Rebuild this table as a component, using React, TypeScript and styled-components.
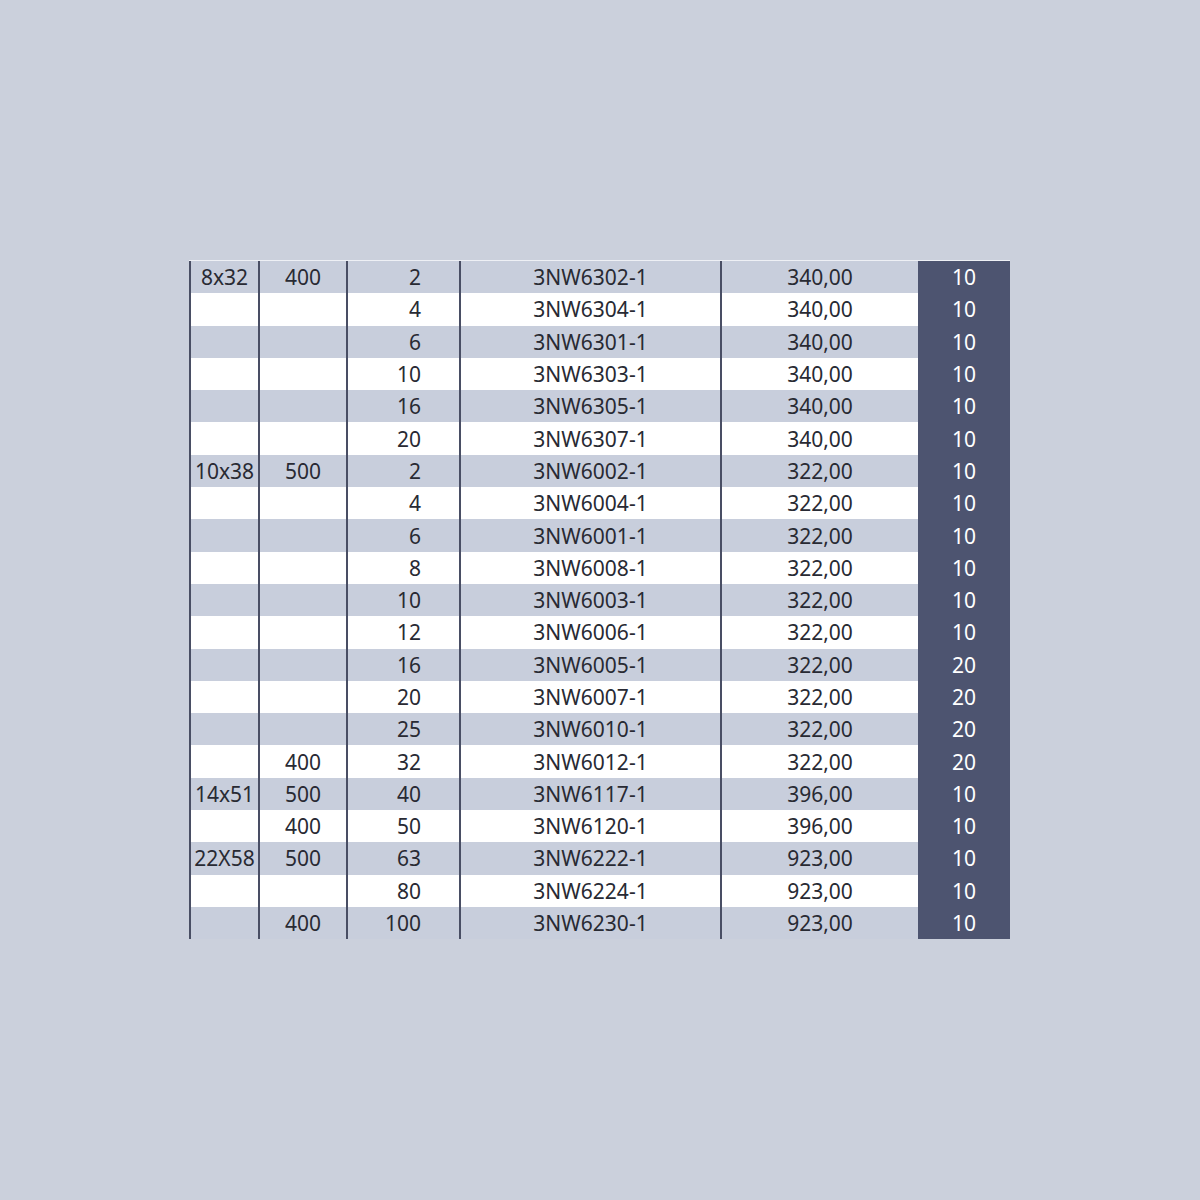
import styled, { createGlobalStyle } from "styled-components";

const GlobalStyle = createGlobalStyle`
  html, body {
    margin: 0;
    padding: 0;
    background: #cbd0dc;
  }
  body {
    font-family: "Noto Sans", "Open Sans", sans-serif;
  }
`;

const Page = styled.div`
  width: 1200px;
  height: 1200px;
  padding: 260px 0 0 189px;
  box-sizing: border-box;
`;

const Table = styled.div`
  width: 821px;
  border-top: 1px solid #eef0f5;
  font-size: 21px;
  color: #282a33;
`;

const Row = styled.div<{ $striped: boolean }>`
  display: grid;
  grid-template-columns: 69px 88px 113px 261px 198px 92px;
  height: 32.3px;
  background: ${(p) => (p.$striped ? "#c8cedc" : "#ffffff")};
`;

const Cell = styled.div<{ $align?: "center" | "right" }>`
  display: flex;
  align-items: center;
  justify-content: ${(p) => (p.$align === "right" ? "flex-end" : "center")};
  padding-right: ${(p) => (p.$align === "right" ? 38 : 0)}px;
  border-left: 2.5px solid #494e64;
  white-space: nowrap;
  overflow: hidden;
`;

const PackCell = styled.div`
  display: flex;
  align-items: center;
  justify-content: center;
  background: #4d5470;
  color: #ffffff;
`;

type Item = {
  size: string;
  volt: string;
  amp: string;
  code: string;
  price: string;
  pack: string;
};

const items: Item[] = [
  { size: "8x32", volt: "400", amp: "2", code: "3NW6302-1", price: "340,00", pack: "10" },
  { size: "", volt: "", amp: "4", code: "3NW6304-1", price: "340,00", pack: "10" },
  { size: "", volt: "", amp: "6", code: "3NW6301-1", price: "340,00", pack: "10" },
  { size: "", volt: "", amp: "10", code: "3NW6303-1", price: "340,00", pack: "10" },
  { size: "", volt: "", amp: "16", code: "3NW6305-1", price: "340,00", pack: "10" },
  { size: "", volt: "", amp: "20", code: "3NW6307-1", price: "340,00", pack: "10" },
  { size: "10x38", volt: "500", amp: "2", code: "3NW6002-1", price: "322,00", pack: "10" },
  { size: "", volt: "", amp: "4", code: "3NW6004-1", price: "322,00", pack: "10" },
  { size: "", volt: "", amp: "6", code: "3NW6001-1", price: "322,00", pack: "10" },
  { size: "", volt: "", amp: "8", code: "3NW6008-1", price: "322,00", pack: "10" },
  { size: "", volt: "", amp: "10", code: "3NW6003-1", price: "322,00", pack: "10" },
  { size: "", volt: "", amp: "12", code: "3NW6006-1", price: "322,00", pack: "10" },
  { size: "", volt: "", amp: "16", code: "3NW6005-1", price: "322,00", pack: "20" },
  { size: "", volt: "", amp: "20", code: "3NW6007-1", price: "322,00", pack: "20" },
  { size: "", volt: "", amp: "25", code: "3NW6010-1", price: "322,00", pack: "20" },
  { size: "", volt: "400", amp: "32", code: "3NW6012-1", price: "322,00", pack: "20" },
  { size: "14x51", volt: "500", amp: "40", code: "3NW6117-1", price: "396,00", pack: "10" },
  { size: "", volt: "400", amp: "50", code: "3NW6120-1", price: "396,00", pack: "10" },
  { size: "22X58", volt: "500", amp: "63", code: "3NW6222-1", price: "923,00", pack: "10" },
  { size: "", volt: "", amp: "80", code: "3NW6224-1", price: "923,00", pack: "10" },
  { size: "", volt: "400", amp: "100", code: "3NW6230-1", price: "923,00", pack: "10" },
];

export default function App() {
  return (
    <>
      <GlobalStyle />
      <Page>
        <Table>
          {items.map((it, i) => (
            <Row key={it.code} $striped={i % 2 === 0}>
              <Cell>{it.size}</Cell>
              <Cell>{it.volt}</Cell>
              <Cell $align="right">{it.amp}</Cell>
              <Cell>{it.code}</Cell>
              <Cell>{it.price}</Cell>
              <PackCell>{it.pack}</PackCell>
            </Row>
          ))}
        </Table>
      </Page>
    </>
  );
}
